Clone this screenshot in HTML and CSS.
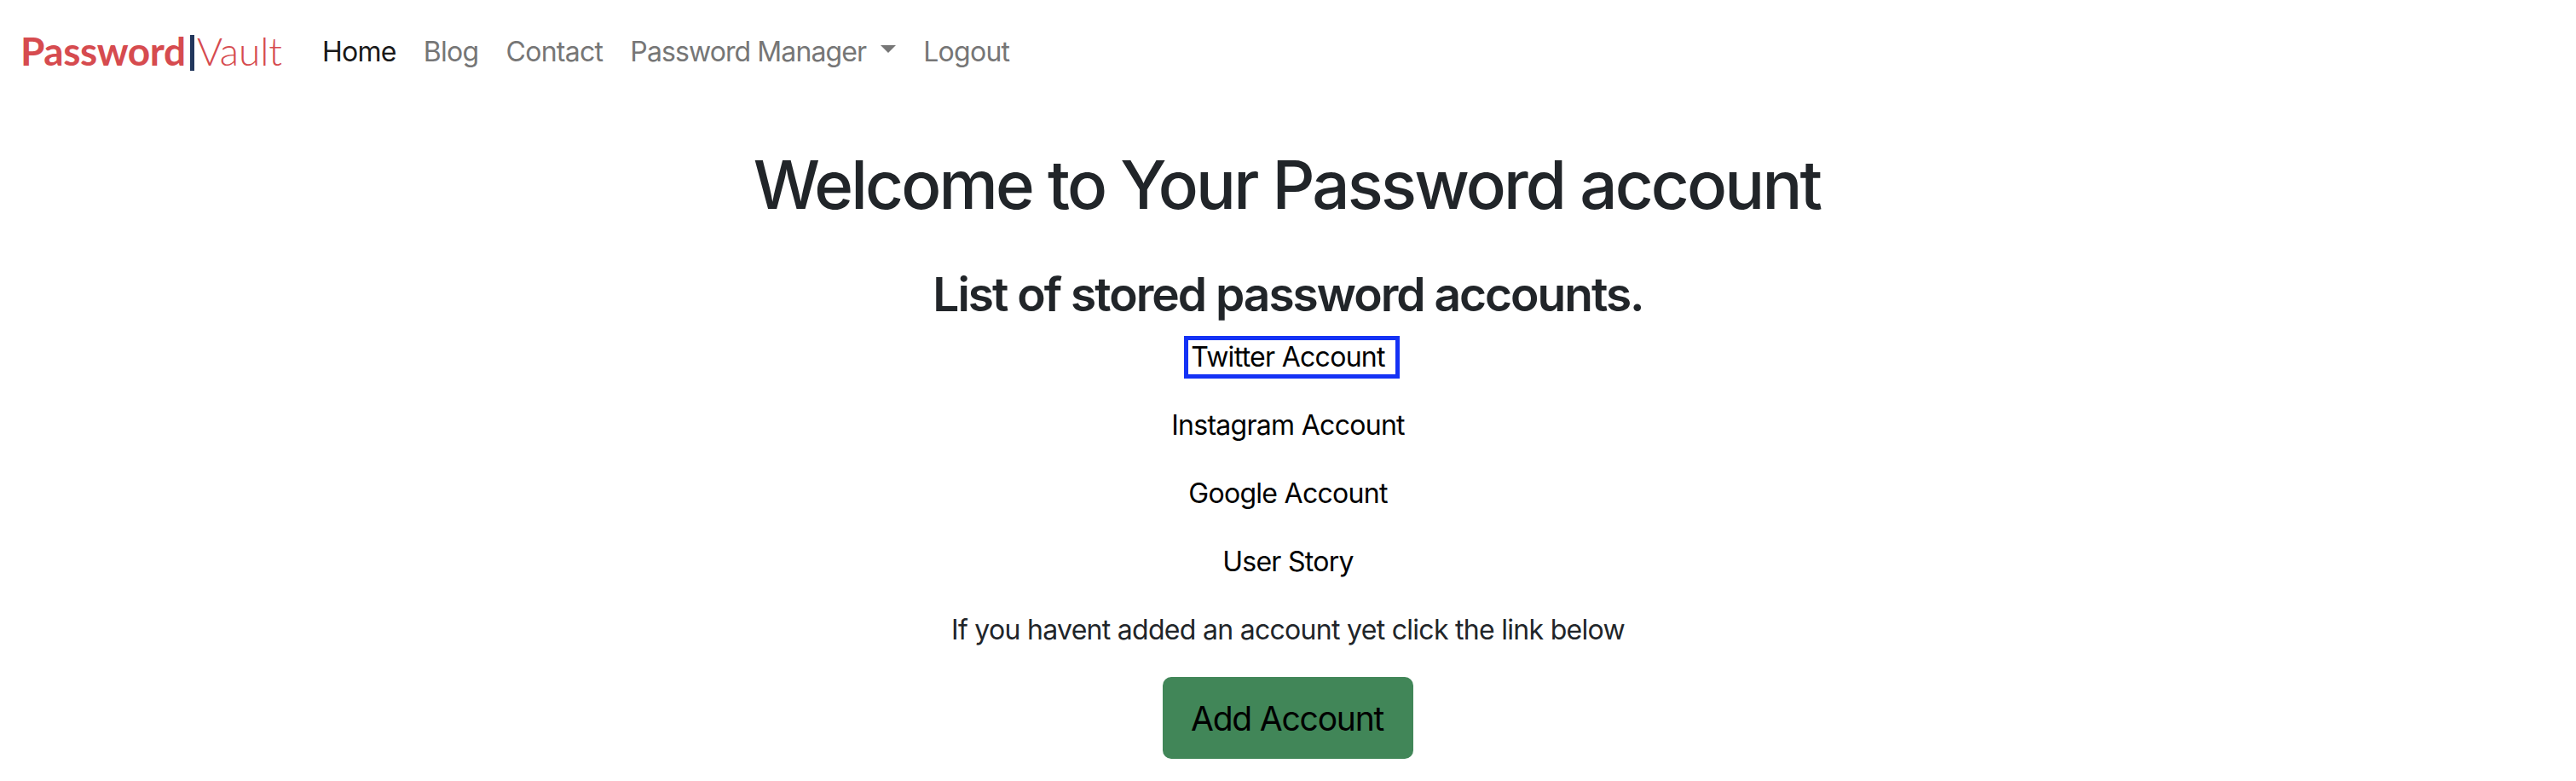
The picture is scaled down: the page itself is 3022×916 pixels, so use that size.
FILE: index.html
```html
<!DOCTYPE html>
<html lang="en">
<head>
<meta charset="utf-8">
<title>Password Vault</title>
<link rel="stylesheet" href="styles.css">
</head>
<body>
<nav class="navbar">
  <a class="brand"><span class="brand-bold">Password</span><span class="brand-bar"></span><span class="brand-light">Vault</span></a>
  <a class="nav-link active">Home</a>
  <a class="nav-link">Blog</a>
  <a class="nav-link">Contact</a>
  <a class="nav-link dropdown"><span class="dropdown-label">Password Manager</span><i class="caret"></i></a>
  <a class="nav-link">Logout</a>
</nav>
<main class="content">
  <h1 class="title">Welcome to Your Password account</h1>
  <h2 class="subtitle">List of stored password accounts.</h2>
  <p class="account selected">Twitter Account</p>
  <p class="account">Instagram Account</p>
  <p class="account">Google Account</p>
  <p class="account">User Story</p>
  <p class="hint">If you havent added an account yet click the link below</p>
  <a class="button">Add Account</a>
</main>
</body>
</html>
```
FILE: styles.css
```css
* { box-sizing: border-box; }
body { margin: 0; background: #fff; color: #212529; font-family: Inter, "Liberation Sans", sans-serif; font-size: 32px; line-height: 48px; letter-spacing: -0.71px; }
h1, h2, p { margin: 0; }
.navbar { display: flex; align-items: flex-start; height: 124px; padding: 36px 24px 0; white-space: nowrap; }
.brand { display: flex; width: 322px; margin-right: 32px; font-family: Lato, sans-serif; font-size: 46px; color: #d64b4f; }
.brand-bold { width: 194px; font-weight: 700; letter-spacing: -0.45px; }
.brand-light { font-weight: 300; letter-spacing: -0.1px; }
.brand-bar { width: 5px; height: 42px; margin: 5px 3px 0 5px; background: #22375c; }
.nav-link { color: #767676; margin-right: 32px; padding-top: 1px; }
.nav-link.active { color: #191919; }
.dropdown { display: flex; }
.dropdown-label { letter-spacing: -0.9px; }
.caret { border: 9px solid transparent; border-top-color: #767676; border-bottom: 0; margin: 16px 0 0 17px; width: 18px; height: 9px; }
.content { display: flex; flex-direction: column; align-items: center; }
.title { margin-top: 45px; padding-right: 3px; font-size: 78px; font-weight: 550; line-height: 96px; letter-spacing: -2.83px; }
.subtitle { margin: 46px 0 15px; font-size: 55px; font-weight: 600; line-height: 68px; letter-spacing: -2px; }
.account, .hint { padding-top: 1px; margin-bottom: 31px; }
.account { color: #000; }
.selected { position: relative; }
.selected::after { content: ""; position: absolute; inset: 0 -17px -1px -8px; border: 5px solid #1432f5; }
.button { display: flex; align-items: center; justify-content: center; width: 294px; height: 96px; border-radius: 10px; background: #418658; color: #000; font-size: 39px; letter-spacing: -1.2px; padding: 1px 2px 0 0; }
```
